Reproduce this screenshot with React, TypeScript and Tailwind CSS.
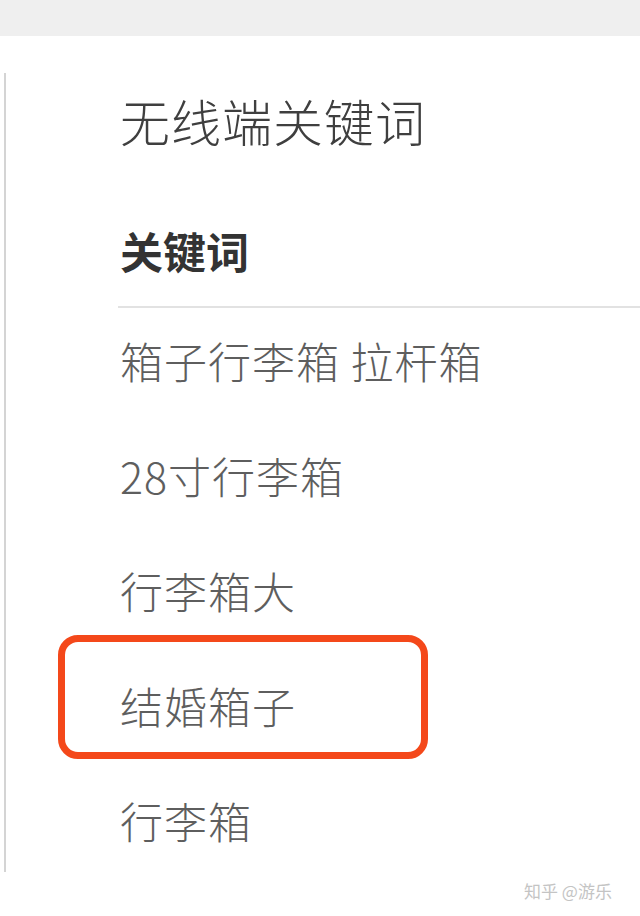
export default function App() {
  const items = ['箱子行李箱 拉杆箱', '28寸行李箱', '行李箱大', '结婚箱子', '行李箱'];

  return (
    <div
      className="relative h-[916px] w-[640px] overflow-hidden bg-white"
      style={{ fontFamily: '"Noto Sans CJK SC", "Noto Sans", sans-serif' }}
    >
      {/* 顶部灰条 */}
      <div className="h-[36px] bg-[#efefef]" />

      {/* 主体 */}
      <div className="ml-[4px] mt-[37px] border-l-2 border-[#d4d4d4] pb-[30px] pt-[22px]">
        <h1 className="ml-[114px] text-[50px] font-light leading-none tracking-[1px] text-[#3f3f3f]">无线端关键词</h1>

        <div className="ml-[114px] mt-[84px] text-[43px] font-bold leading-none text-[#333]">关键词</div>

        <div className="ml-[112px] mt-[34px] border-t-2 border-[#e2e2e2]" />

        <ul className="ml-[114px] mt-[31px] flex flex-col gap-[72px]">
          {items.map((item, i) => (
            <li key={i} className="relative text-[43px] font-light leading-none tracking-[1px] text-[#5e5e5e]">
              {item}
              {i === 3 && (
                <span className="absolute left-[-62px] top-[-49px] h-[124px] w-[370px] rounded-[20px] border-[7px] border-[#f4481a]" />
              )}
            </li>
          ))}
        </ul>
      </div>

      {/* 水印 */}
      <div className="absolute left-[524px] top-[882px] text-[17px] leading-none text-[#c4c4c4]">知乎 @游乐</div>
    </div>
  );
}
